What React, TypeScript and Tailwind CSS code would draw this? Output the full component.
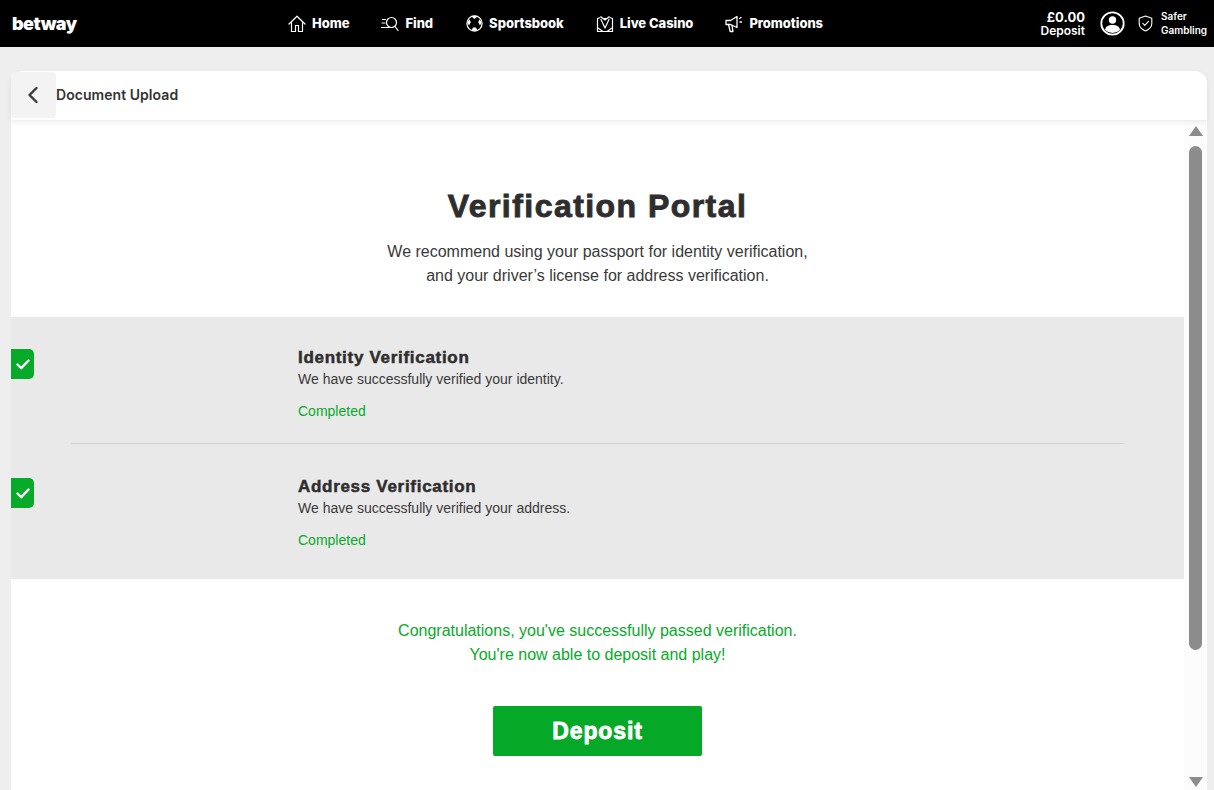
import React from "react";

function HomeIcon() {
  return (
    <svg width="18" height="18" viewBox="0 0 18 18" fill="none" stroke="white" strokeWidth="1.2" strokeLinejoin="round" strokeLinecap="round">
      <path d="M1 9 9 1.200 17 9" />
      <path d="M3.500 7.500v9h4V10.500h3v6h4v-9" />
    </svg>
  );
}

function FindIcon() {
  return (
    <svg width="18" height="16" viewBox="0 0 18 16" fill="none" stroke="white" strokeWidth="1.2" strokeLinecap="round">
      <circle cx="10.500" cy="6.500" r="5" />
      <path d="m14 10.500 3 4M1.500 3.500h3M1 7h3M.5 11.500h7.500" />
    </svg>
  );
}

function BallIcon() {
  return (
    <svg width="17" height="17" viewBox="0 0 17 17" fill="none" stroke="white" strokeWidth="1.2">
      <circle cx="8.500" cy="8.500" r="7.600" />
      <path d="M5.500 1.600 8.500 4l3-2.400-1-.8h-4zM1.200 7.500l2.300-3.300 1.300 3-1.800 3.300zM15.800 7.500l-2.300-3.300-1.300 3 1.800 3.300zM5.500 15.800 7 12.500h3l1.500 3.300z" fill="white" stroke="none" />
    </svg>
  );
}

function CasinoIcon() {
  return (
    <svg width="18" height="18" viewBox="0 0 18 18" fill="none" stroke="white" strokeWidth="1.2" strokeLinejoin="round">
      <path d="M4.500 2.500 1.500 3.500v13h15v-13l-3-1" />
      <path d="M4.500 1.500 9 5l4.500-3.500M4.800 4 9 13l4.200-9M7 3.500h4M2 13l5 3.500M16 13l-5 3.500" />
    </svg>
  );
}

function PromoIcon() {
  return (
    <svg width="18" height="18" viewBox="0 0 18 18" fill="none" stroke="white" strokeWidth="1.3" strokeLinejoin="round" strokeLinecap="round">
      <path d="M1 5.500h4.500L12 1.500v11L5.500 9.500H1z" />
      <path d="m3.500 9.500 1.700 7h2.800L7 10.500M14.500 3.500l1.500-1M15 7h1.500" />
    </svg>
  );
}

function NavItem({ icon, label }: { icon: React.ReactNode; label: string }) {
  return (
    <a className="flex items-center gap-[6px] text-[13px] font-extrabold tracking-[-0.05px] text-white">
      <span className="flex w-[18px] justify-center">{icon}</span>
      {label}
    </a>
  );
}

function VerificationRow({ title, text, className }: { title: string; text: string; className: string }) {
  return (
    <div className={`relative pl-[287px] ${className}`}>
      <div className="absolute left-0 flex h-[30px] w-[23px] items-center justify-center rounded-r-[5px] bg-[#07aa29] [top:var(--check-top)]">
        <svg width="14" height="11" viewBox="0 0 14 11" fill="none" stroke="white" strokeWidth="2.400" strokeLinecap="round" strokeLinejoin="round">
          <path d="m1.500 5.500 3.700 3.700 7.300-7.700" />
        </svg>
      </div>
      <h3 className="text-[17px] leading-[22px] font-bold tracking-[0.7px] text-[#2e2e2e] [-webkit-text-stroke:0.5px_#2e2e2e]">{title}</h3>
      <p className="text-[14px] leading-[20px] text-[#3a3a3a]">{text}</p>
      <p className="mt-[12px] text-[14px] leading-[20px] text-[#07aa29]">Completed</p>
    </div>
  );
}

export default function App() {
  return (
    <div className="flex h-[790px] w-[1214px] flex-col overflow-hidden bg-[#eeeeee] font-['Liberation_Sans',Arial,sans-serif]">
      {/* Top bar */}
      <header className="flex h-[47px] shrink-0 items-center bg-black font-['Inter',sans-serif] text-white">
        <div className="w-[288px] pl-[12px] text-[18px] leading-none font-black tracking-[-0.5px]">betway</div>
        <nav className="flex items-center gap-[32px]">
          <NavItem icon={<HomeIcon />} label="Home" />
          <NavItem icon={<FindIcon />} label="Find" />
          <NavItem icon={<BallIcon />} label="Sportsbook" />
          <NavItem icon={<CasinoIcon />} label="Live Casino" />
          <NavItem icon={<PromoIcon />} label="Promotions" />
        </nav>
        <div className="ml-auto flex items-center">
          <div className="text-right text-[12px] leading-[14px] font-semibold">
            <div className="text-[13px] font-bold">£0.00</div>
            <div>Deposit</div>
          </div>
          <svg className="ml-[15px]" width="25" height="25" viewBox="0 0 25 25" fill="none">
            <circle cx="12.500" cy="12.500" r="11.200" stroke="white" strokeWidth="1.800" />
            <circle cx="12.500" cy="9" r="3.700" fill="white" />
            <path d="M5 19c.6-3.600 3-5 7.500-5s6.900 1.400 7.500 5a11 11 0 0 1-15 0z" fill="white" />
          </svg>
          <svg className="ml-[13px]" width="15" height="17" viewBox="0 0 15 17" fill="none" stroke="white" strokeWidth="1.100" strokeLinejoin="round" strokeLinecap="round">
            <path d="M7.500 1 13.800 3.200v5.300c0 3.400-2.600 5.900-6.300 7.500C3.800 14.400 1.200 11.900 1.200 8.500V3.200z" />
            <path d="m4.800 8.300 2 2 3.700-3.900" />
          </svg>
          <div className="mb-[2px] ml-[8px] w-[53px] text-[10px] leading-[14px] font-semibold">
            Safer
            <br />
            Gambling
          </div>
        </div>
      </header>

      {/* Content card */}
      <main className="mt-[24px] flex min-h-0 flex-1 flex-col pl-[11px] pr-[7px]">
        <div className="relative z-10 flex h-[49px] shrink-0 items-center rounded-t-[12px] bg-white shadow-[0_2px_5px_rgba(0,0,0,0.08)]">
          <button className="mb-[1px] flex h-[46px] w-[45px] items-center justify-center rounded-[4px] bg-[#f3f3f3] pr-[2px]">
            <svg width="12" height="18" viewBox="0 0 12 18" fill="none" stroke="#3a3a3a" strokeWidth="2.400" strokeLinecap="round" strokeLinejoin="round">
              <path d="M9.500 2 2.500 9l7 7" />
            </svg>
          </button>
          <span className="mb-[2px] font-['Inter',sans-serif] text-[14px] font-semibold tracking-[0.05px] text-[#333333]">Document Upload</span>
        </div>

        <div className="flex min-h-0 flex-1 bg-white">
          <div className="w-[1173px] shrink-0">
            <div className="flex h-[197px] flex-col items-center pt-[67px] text-center">
              <h1 className="text-[32px] leading-[38px] font-bold tracking-[1.450px] text-[#2e2e2e] [-webkit-text-stroke:0.9px_#2e2e2e]">Verification Portal</h1>
              <p className="mt-[15px] text-[16px] leading-[24px] text-[#3a3a3a]">
                We recommend using your passport for identity verification,
                <br />
                and your driver’s license for address verification.
              </p>
            </div>

            <section className="bg-[#e9e9e9]">
              <VerificationRow
                title="Identity Verification"
                text="We have successfully verified your identity."
                className="h-[126px] pt-[30px] [--check-top:32px]"
              />
              <div className="mx-[60px] h-px bg-[#d2d2d2]" />
              <VerificationRow
                title="Address Verification"
                text="We have successfully verified your address."
                className="h-[135px] pt-[32px] [--check-top:34px]"
              />
            </section>

            <div className="flex flex-col items-center pt-[40px] text-center">
              <p className="text-[16px] leading-[24px] text-[#07aa29]">
                Congratulations, you've successfully passed verification.
                <br />
                You're now able to deposit and play!
              </p>
              <button className="mt-[39px] h-[50px] w-[209px] rounded-[2px] bg-[#05a927] text-[23px] font-bold tracking-[0.85px] text-white [-webkit-text-stroke:0.8px_white]">Deposit</button>
            </div>
          </div>

          {/* Scrollbar */}
          <div className="flex w-[22px] shrink-0 flex-col items-center bg-[#fcfcfc] pl-[1px]">
            <div className="mt-[6px] h-0 w-0 border-x-[7.500px] border-b-[10px] border-x-transparent border-b-[#8c8c8c]" />
            <div className="mt-[10px] h-[504px] w-[13px] rounded-full bg-[#8c8c8c]" />
            <div className="mt-auto mb-[3px] h-0 w-0 border-x-[7.500px] border-t-[10px] border-x-transparent border-t-[#8c8c8c]" />
          </div>
        </div>
      </main>
    </div>
  );
}
